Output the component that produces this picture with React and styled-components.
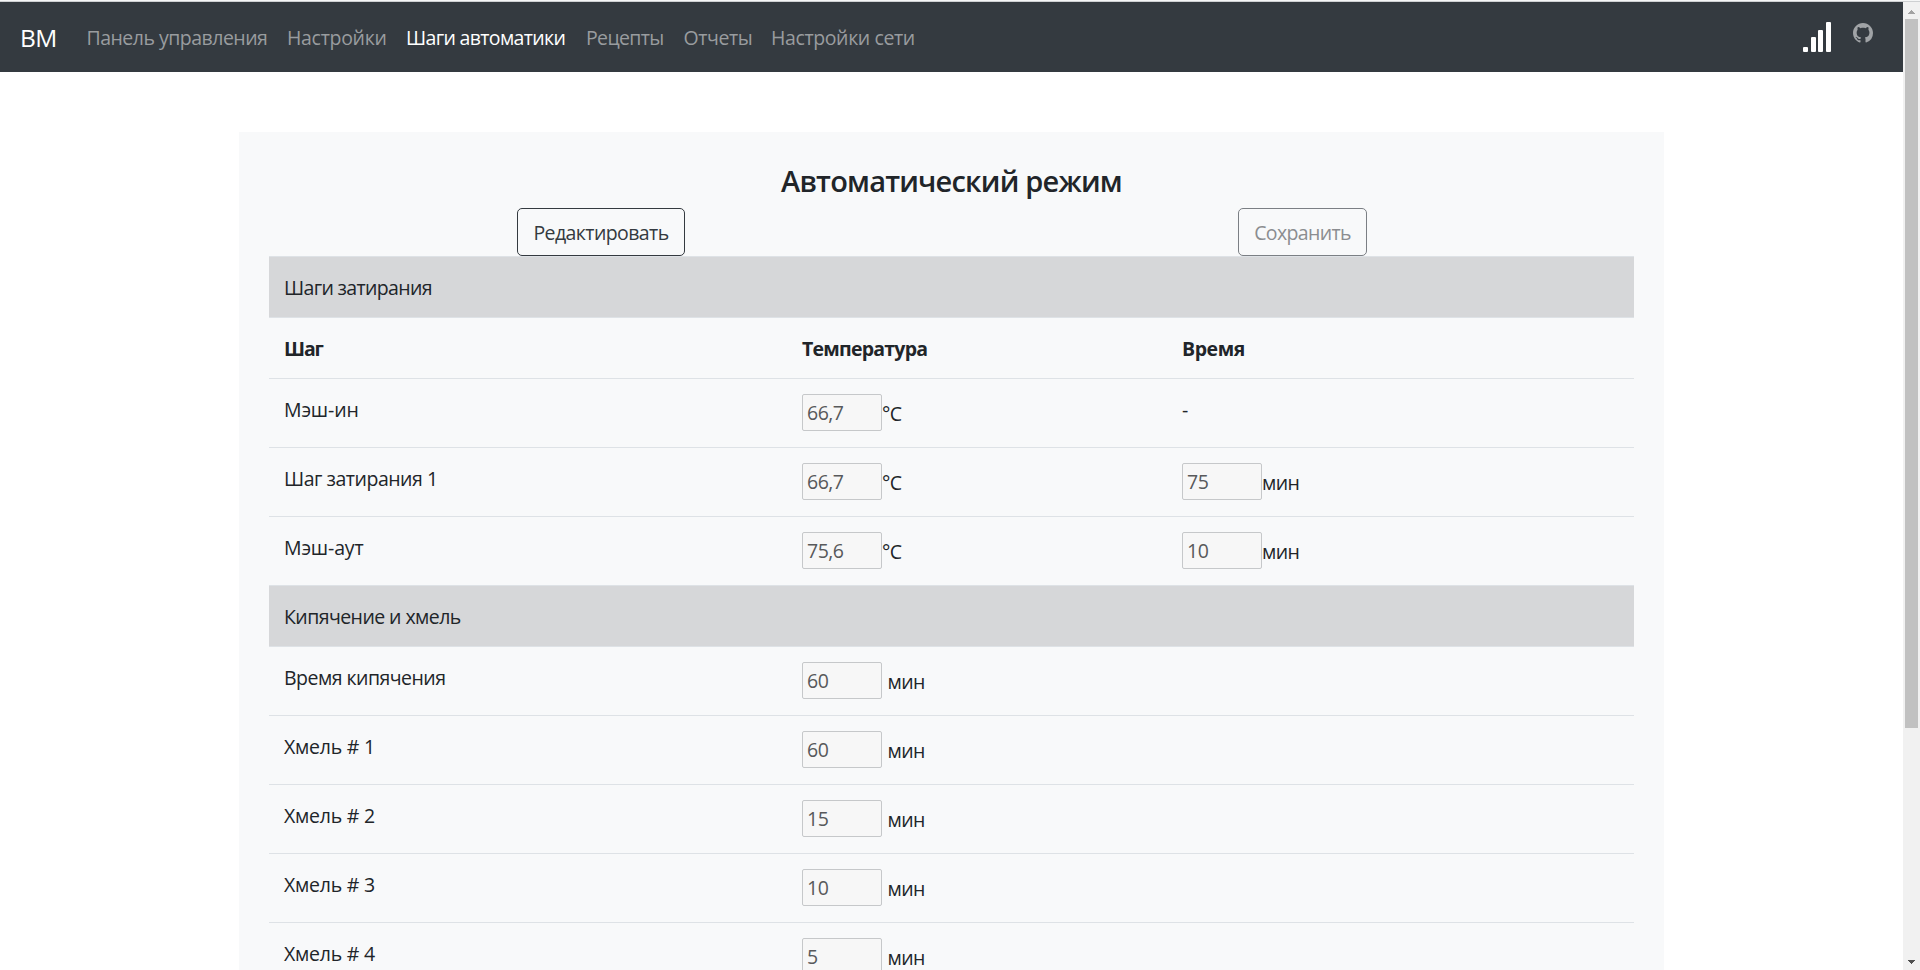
import React from 'react';
import styled, { createGlobalStyle, css } from 'styled-components';

const GlobalStyle = createGlobalStyle`
  *, *::before, *::after { box-sizing: border-box; }
  body {
    margin: 0;
    overflow: hidden;
    background: #fff;
    color: #212529;
    font-family: 'Open Sans', 'Noto Sans', sans-serif;
    font-size: 19.5px;
    line-height: 30px;
  }
`;

const tracked = css`
  letter-spacing: ${(p) => p.$track || 0}px;
  white-space: nowrap;
`;

const Window = styled.div`
  display: flex;
  width: 1920px;
  height: 970px;
  border-top: 1px solid #f5f6f6;
  overflow: hidden;
`;

const Page = styled.div`
  flex: 1;
  display: flex;
  flex-direction: column;
  align-items: center;
  border-top: 1px solid #ced0d2;
`;

const Navbar = styled.nav`
  display: flex;
  align-items: center;
  align-self: stretch;
  flex: none;
  height: 70px;
  padding: 0 30px 0 20px;
  background: #343a40;
`;

const Brand = styled.a`
  width: 56.5px;
  color: #fff;
  font-size: 24.5px;
  line-height: 37px;
  ${tracked}
`;

const NavList = styled.div`
  display: flex;
  flex: 1;
`;

const NavLink = styled.a`
  width: ${(p) => p.$width}px;
  padding: 12px 10px 10px;
  color: ${(p) => (p.$active ? '#fff' : '#999c9f')};
  font-weight: ${(p) => (p.$active ? 500 : 400)};
  ${tracked}
`;

const NavIcons = styled.div`
  display: flex;
  align-items: flex-start;
  gap: 22px;
  height: 30px;
`;

const Panel = styled.main`
  flex: none;
  width: 1425px;
  height: 900px;
  margin-top: 60px;
  padding: 30px;
  background: #f8f9fa;
`;

const Title = styled.h4`
  margin: 0;
  padding: 1px 0 9px;
  font-size: 29px;
  font-weight: 600;
  line-height: 36px;
  text-align: center;
  ${tracked}
`;

const Actions = styled.div`
  display: grid;
  grid-template-columns: 664px 1fr;
  justify-items: center;
  height: 48px;
`;

const Button = styled.button`
  width: ${(p) => p.$width}px;
  height: 48px;
  padding: 2px 0 0;
  border: 1px solid #343a40;
  border-radius: 5px;
  background: transparent;
  color: #343a40;
  font: inherit;
  ${tracked}
  &:disabled { color: #8b8d90; border-color: #7b7f84; }
`;

const EditSlot = styled.div`
  padding-left: 0;
`;

const SaveSlot = styled.div`
  padding-left: 38px;
`;

const Row = styled.div`
  display: grid;
  grid-template-columns: 518px 380px 1fr;
  height: 69px;
  border-top: 1px solid #dee2e6;
`;

const HeadRow = styled(Row)`
  height: 61px;
  font-weight: 700;
`;

const SectionRow = styled(HeadRow)`
  background: #d6d7d9;
  font-weight: 400;
`;

const Cell = styled.div`
  display: flex;
  align-items: flex-start;
  padding: 15px;
`;

const Label = styled.span`
  padding-top: 1px;
  ${tracked}
`;

const Field = styled.input`
  width: 80px;
  height: 37px;
  padding: 0 5px 1px 4px;
  border: 1px solid #c6c8ca;
  border-radius: 2px;
  background: #f7f7f7;
  color: #58595b;
  font: inherit;
  letter-spacing: -0.5px;
`;

const Unit = styled.span`
  padding-top: 5px;
  margin-left: ${(p) => (p.$spaced ? 5.5 : 0)}px;
  ${tracked}
`;

const Scrollbar = styled.div`
  display: flex;
  flex-direction: column;
  align-items: center;
  justify-content: space-between;
  width: 17px;
  padding: 8px 0 6px;
  border-top: 1px solid #ced0d2;
  background: #f1f1f1;
`;

const Track = styled.div`
  flex: 1;
  width: 13px;
  padding: 5px 0;
`;

const Thumb = styled.div`
  height: 709px;
  background: #c1c1c1;
`;

const navItems = [
  { text: 'Панель управления', width: 200.5, track: -0.51 },
  { text: 'Настройки', width: 119, track: -0.3 },
  { text: 'Шаги автоматики', width: 180, track: -0.65, active: true },
  { text: 'Рецепты', width: 97.5, track: -0.63 },
  { text: 'Отчеты', width: 87.5, track: -0.4 },
  { text: 'Настройки сети', width: 170, track: -0.38 },
];

const mashSteps = [
  { name: 'Мэш-ин', track: -0.15, temp: '66,7' },
  { name: 'Шаг затирания 1', track: -0.48, temp: '66,7', time: '75' },
  { name: 'Мэш-аут', track: -0.15, temp: '75,6', time: '10' },
];

const boilSteps = [
  { name: 'Время кипячения', track: -0.52, time: '60' },
  { name: 'Хмель # 1', track: -0.24, time: '60' },
  { name: 'Хмель # 2', track: -0.24, time: '15' },
  { name: 'Хмель # 3', track: -0.24, time: '10' },
  { name: 'Хмель # 4', track: -0.24, time: '5' },
];

function SignalIcon() {
  return (
    <svg width="28" height="30" viewBox="0 0 28 30" fill="#fff">
      <rect x="0" y="25" width="5" height="5" rx="1" />
      <rect x="8" y="15" width="5" height="15" rx="1" />
      <rect x="15" y="8" width="5" height="22" rx="1" />
      <rect x="23" y="0" width="5" height="30" rx="1" />
    </svg>
  );
}

function GithubIcon() {
  return (
    <svg width="20" height="22" viewBox="0 -0.8 16 17.6" fill="#a0a3a6">
      <path d="M8 0C3.58 0 0 3.58 0 8c0 3.54 2.29 6.53 5.47 7.59.4.07.55-.17.55-.38 0-.19-.01-.82-.01-1.49-2.01.37-2.53-.49-2.69-.94-.09-.23-.48-.94-.82-1.13-.28-.15-.68-.52-.01-.53.63-.01 1.08.58 1.23.82.72 1.21 1.87.87 2.33.66.07-.52.28-.87.51-1.07-1.78-.2-3.64-.89-3.64-3.95 0-.87.31-1.59.82-2.15-.08-.2-.36-1.02.08-2.12 0 0 .67-.21 2.2.82.64-.18 1.32-.27 2-.27s1.36.09 2 .27c1.53-1.04 2.2-.82 2.2-.82.44 1.1.16 1.92.08 2.12.51.56.82 1.27.82 2.15 0 3.07-1.87 3.75-3.65 3.95.29.25.54.73.54 1.48 0 1.07-.01 1.93-.01 2.2 0 .21.15.46.55.38A8.01 8.01 0 0 0 16 8c0-4.42-3.58-8-8-8z" />
    </svg>
  );
}

function Arrow({ down }) {
  return (
    <svg width="7" height="4" viewBox="0 0 7 4" shapeRendering="crispEdges">
      <path d={down ? 'M0 0H7L3.5 4Z' : 'M0 4H7L3.5 0Z'} fill={down ? '#505050' : '#a3a3a3'} />
    </svg>
  );
}

function Value({ value, unit, spaced }) {
  return (
    <>
      <Field value={value} disabled readOnly />
      <Unit $spaced={spaced} $track={unit === 'мин' ? -0.6 : -0.6}>{unit}</Unit>
    </>
  );
}

export default function App() {
  return (
    <Window>
      <GlobalStyle />
      <Page>
        <Navbar>
          <Brand $track={-0.6}>BM</Brand>
          <NavList>
            {navItems.map((item) => (
              <NavLink key={item.text} $width={item.width} $track={item.track} $active={item.active}>
                {item.text}
              </NavLink>
            ))}
          </NavList>
          <NavIcons>
            <SignalIcon />
            <GithubIcon />
          </NavIcons>
        </Navbar>
        <Panel>
          <Title $track={-0.8}>Автоматический режим</Title>
          <Actions>
            <EditSlot>
              <Button $width={168} $track={-0.58}>Редактировать</Button>
            </EditSlot>
            <SaveSlot>
              <Button $width={129} $track={-0.65} disabled>Сохранить</Button>
            </SaveSlot>
          </Actions>
          <SectionRow>
            <Cell><Label $track={-0.65}>Шаги затирания</Label></Cell>
          </SectionRow>
          <HeadRow>
            <Cell><Label $track={-1.1}>Шаг</Label></Cell>
            <Cell><Label $track={-0.76}>Температура</Label></Cell>
            <Cell><Label $track={-0.42}>Время</Label></Cell>
          </HeadRow>
          {mashSteps.map((step) => (
            <Row key={step.name}>
              <Cell><Label $track={step.track}>{step.name}</Label></Cell>
              <Cell><Value value={step.temp} unit="°C" /></Cell>
              <Cell>{step.time ? <Value value={step.time} unit="мин" /> : <Label>-</Label>}</Cell>
            </Row>
          ))}
          <SectionRow>
            <Cell><Label $track={-0.56}>Кипячение и хмель</Label></Cell>
          </SectionRow>
          {boilSteps.map((step) => (
            <Row key={step.name}>
              <Cell><Label $track={step.track}>{step.name}</Label></Cell>
              <Cell><Value value={step.time} unit="мин" spaced /></Cell>
            </Row>
          ))}
        </Panel>
      </Page>
      <Scrollbar>
        <Arrow />
        <Track><Thumb /></Track>
        <Arrow down />
      </Scrollbar>
    </Window>
  );
}
